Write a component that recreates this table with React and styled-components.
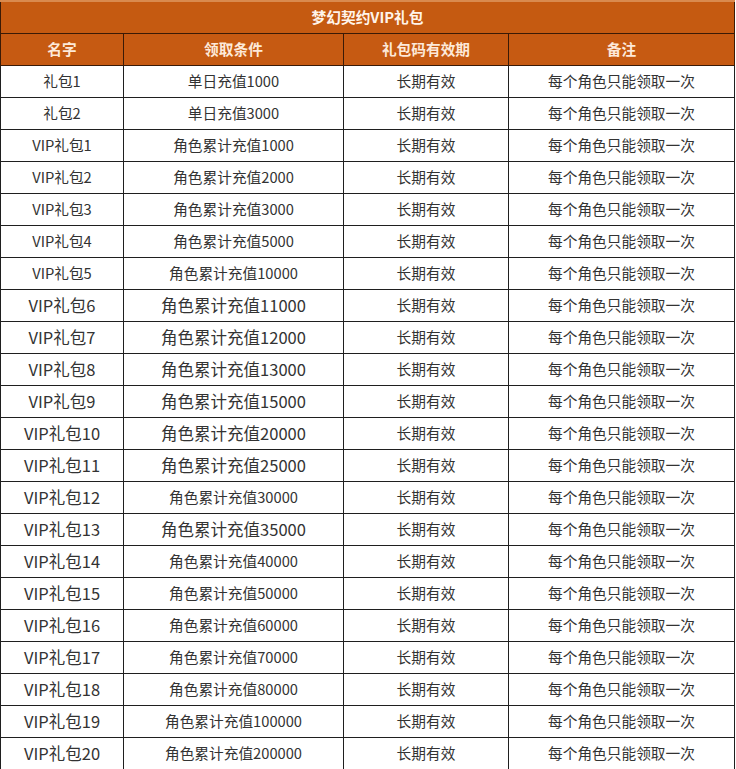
import React from "react";
import styled, { createGlobalStyle } from "styled-components";

const Global = createGlobalStyle`
  html, body { margin: 0; padding: 0; background: #ffffff; }
  body { font-family: "Noto Sans CJK SC", "Microsoft YaHei", sans-serif; }
`;

const Table = styled.table`
  width: 734px;
  border-collapse: collapse;
  table-layout: fixed;
  font-family: "Noto Sans CJK SC", sans-serif;
  color: #333333;
`;

const Col = styled.col`
  width: ${(p) => p.$w}px;
`;

const TitleCell = styled.th`
  height: 31px;
  padding: 0;
  background: #c55a11;
  color: #fff4ea;
  font-size: 14.7px;
  font-weight: 700;
  text-align: center;
  border: 1px solid #3a1a06;
  border-top: 2px solid #d98a4e;
  line-height: 1;
`;

const HeadCell = styled.th`
  height: 31px;
  padding: 0;
  background: #c65a12;
  color: #fde9d9;
  font-size: 14.7px;
  font-weight: 700;
  text-align: center;
  border: 1px solid #3a1a06;
  line-height: 1;
`;

const Cell = styled.td`
  height: 31px;
  padding: 0;
  background: #ffffff;
  font-size: ${(p) => (p.$big ? "16.5px" : "14.7px")};
  text-align: center;
  border: 1px solid #1f1f1f;
  line-height: 1;
  white-space: nowrap;
`;

const condAmounts = [1000, 2000, 3000, 5000, 10000, 11000, 12000, 13000, 15000, 20000, 25000, 30000, 35000, 40000, 50000, 60000, 70000, 80000, 100000, 200000];
const bigCond = new Set([6, 7, 8, 9, 10, 11, 13]);

const rows = [
  { name: "礼包1", cond: "单日充值1000", bigName: false, bigCond: false },
  { name: "礼包2", cond: "单日充值3000", bigName: false, bigCond: false },
  ...condAmounts.map((a, i) => ({
    name: `VIP礼包${i + 1}`,
    cond: `角色累计充值${a}`,
    bigName: i + 1 >= 6,
    bigCond: bigCond.has(i + 1),
  })),
];

export default function App() {
  return (
    <>
      <Global />
      <Table>
        <colgroup>
          <Col $w={123} />
          <Col $w={220} />
          <Col $w={165} />
          <Col $w={226} />
        </colgroup>
        <thead>
          <tr>
            <TitleCell colSpan={4}>梦幻契约VIP礼包</TitleCell>
          </tr>
          <tr>
            <HeadCell>名字</HeadCell>
            <HeadCell>领取条件</HeadCell>
            <HeadCell>礼包码有效期</HeadCell>
            <HeadCell>备注</HeadCell>
          </tr>
        </thead>
        <tbody>
          {rows.map((r) => (
            <tr key={r.name}>
              <Cell $big={r.bigName}>{r.name}</Cell>
              <Cell $big={r.bigCond}>{r.cond}</Cell>
              <Cell>长期有效</Cell>
              <Cell>每个角色只能领取一次</Cell>
            </tr>
          ))}
        </tbody>
      </Table>
    </>
  );
}
